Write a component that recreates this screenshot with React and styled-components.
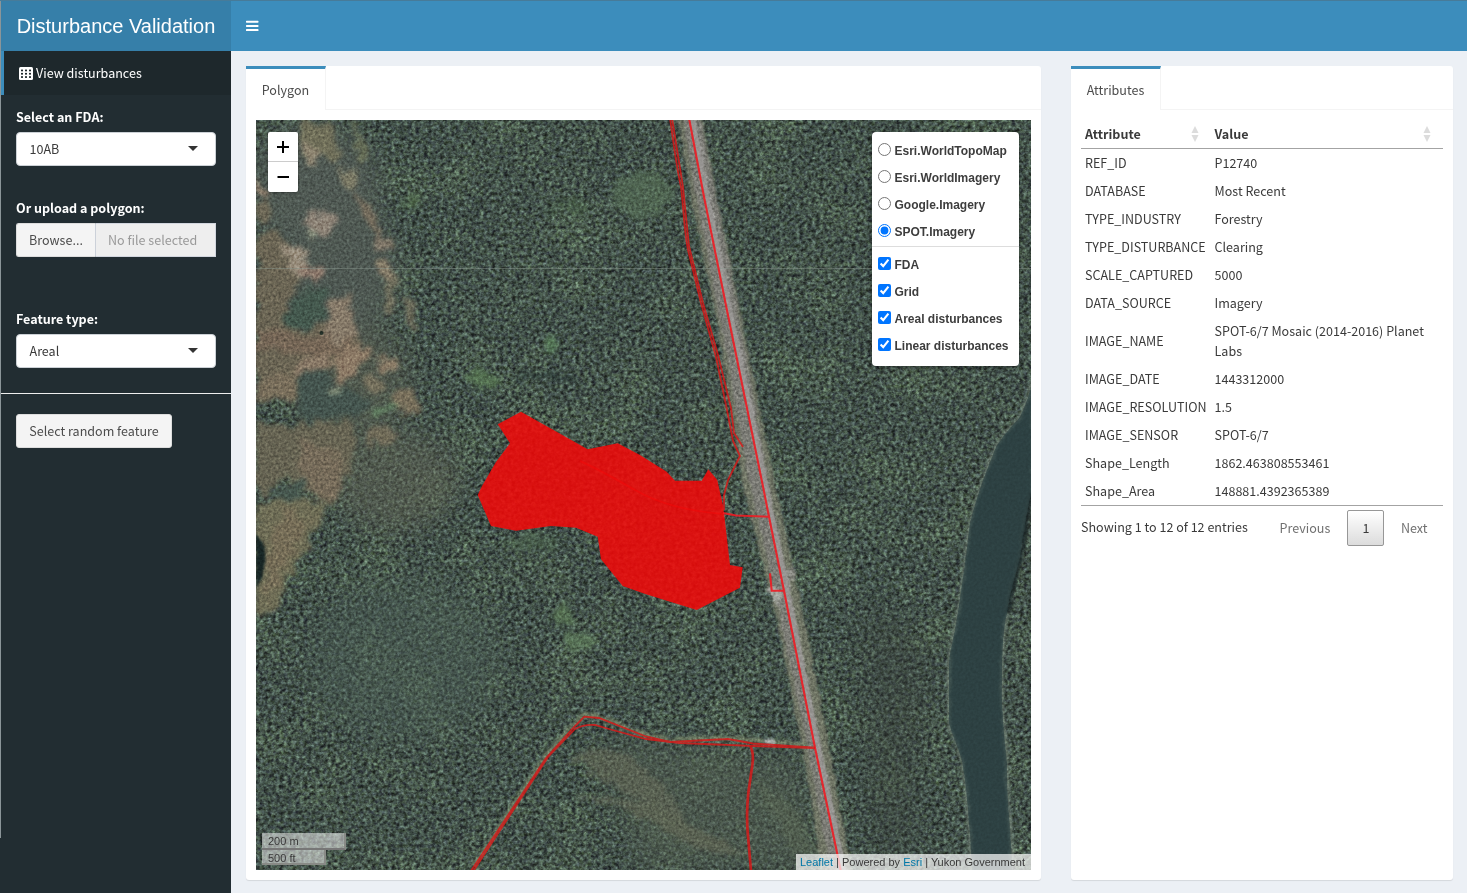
import React from 'react';
import styled, { createGlobalStyle } from 'styled-components';

const GlobalStyle = createGlobalStyle`
  * { box-sizing: border-box; }
  body {
    margin: 0;
    background: #222d32;
    font-family: "Noto Sans CJK SC", "Open Sans", sans-serif;
    font-size: 12.55px;
    line-height: 20px;
    color: #3a3a3a;
  }
`;

const Page = styled.div`
  display: grid;
  grid-template-columns: 1px 230px 1fr;
  grid-template-rows: 50px 1fr;
  height: 893px;
  overflow: hidden;
  border-top: 1px solid #477b99;
`;

const WindowEdge = styled.div`
  grid-row: 1 / 3;
  background: linear-gradient(#8b9599 837px, #222d32 837px);
`;

const Logo = styled.div`
  background: #367fa9;
  color: #fff;
  font: 20px/50px "Liberation Sans", Arial, sans-serif;
  text-align: center;
  white-space: nowrap;
`;

const Navbar = styled.header`
  background: #3c8dbc;
  display: flex;
  align-items: center;
  padding-left: 15px;
`;

const Sidebar = styled.aside`
  background: #222d32;
  color: #fff;
`;

const MenuItem = styled.a`
  display: flex;
  align-items: center;
  gap: 3px;
  height: 44px;
  padding-left: 15px;
  background: #1e282c;
  border-left: 3px solid #3c8dbc;
`;

const Field = styled.div`
  padding: ${p => p.$top}px 15px 0;
`;

const Label = styled.label`
  display: block;
  font-weight: 700;
  margin-bottom: 5px;
`;

const SelectBox = styled.div`
  display: flex;
  align-items: center;
  justify-content: space-between;
  height: 34px;
  padding: 0 17px 0 12.5px;
  background: #fff;
  color: #3a3a3a;
  border: 1px solid #ccd1d6;
  border-radius: 4px;
`;

const Caret = styled.span`
  margin-bottom: 2px;
  border: 5px solid transparent;
  border-top-color: #333;
  border-bottom: 0;
`;

const FileGroup = styled.div`
  display: flex;
  height: 34px;
  line-height: 32px;
`;

const Browse = styled.span`
  width: 80px;
  padding-left: 12px;
  background: #f4f4f4;
  color: #4c4c4c;
  border: 1px solid #ddd;
  border-right-color: #ccd1d9;
  border-radius: 3px 0 0 3px;
`;

const FileName = styled.span`
  flex: 1;
  padding-left: 12px;
  background: #eee;
  color: #999;
  border: 1px solid #d2d6de;
  border-left: 0;
`;

const Rule = styled.hr`
  margin: 25px 0 20px;
  border: 0;
  border-top: 1px solid #eee;
`;

const RandomButton = styled.button`
  display: block;
  width: 156px;
  height: 34px;
  margin-left: 15px;
  padding: 0;
  background: #f4f4f4;
  color: #4c4c4c;
  border: 1px solid #ddd;
  border-radius: 3px;
  font: inherit;
`;

const Content = styled.main`
  display: flex;
  gap: 30px;
  align-items: flex-start;
  padding: 15px 14px 0 15px;
  background: #ecf0f5;
`;

const Box = styled.section`
  width: ${p => p.$width}px;
  height: 814px;
  background: #fff;
  border-radius: 3px;
  box-shadow: 0 1px 1px rgba(0, 0, 0, .1);
`;

const TabBar = styled.div`
  display: flex;
  height: 44px;
  border-bottom: 1px solid #f4f4f4;
`;

const Tab = styled.div`
  width: ${p => p.$width}px;
  height: 44px;
  background: #fff;
  border-top: 3px solid #3c8dbc;
  border-right: 1px solid #f4f4f4;
  color: #4c4c4c;
  text-align: center;
  line-height: 42px;
`;

const Pane = styled.div`
  padding: 10px;
`;

const MapFrame = styled.div`
  position: relative;
  height: 750px;
  overflow: hidden;
  font: 12px/18px "Liberation Sans", Arial, sans-serif;
`;

const MapDrawing = styled.svg`
  display: block;
  width: 775px;
  height: 750px;
`;

const Texture = styled.rect`
  mix-blend-mode: overlay;
`;

const ZoomControl = styled.div`
  position: absolute;
  top: 12px;
  left: 12px;
  width: 30px;
  height: 60px;
  background: #fff;
  border-radius: 2px;
  box-shadow: 0 1px 3px rgba(0, 0, 0, .4);
`;

const ZoomButton = styled.div`
  display: grid;
  place-items: center;
  height: 30px;
  &:first-child { border-bottom: 1px solid #ccc; }
`;

const Layers = styled.div`
  position: absolute;
  top: 12px;
  right: 12px;
  width: 147px;
  height: 234px;
  padding-top: 5px;
  background: #fff;
  border-radius: 4px;
  box-shadow: 0 1px 4px rgba(0, 0, 0, .4);
`;

const LayerOption = styled.label`
  display: flex;
  align-items: center;
  gap: 3.5px;
  height: 27px;
  padding-left: 6px;
  color: #3d3d3d;
  font-weight: 700;
  white-space: nowrap;
  input {
    width: 13px;
    height: 13px;
    margin: 0 0 2px;
    accent-color: #0075ff;
  }
`;

const LayerDivider = styled.div`
  height: 1px;
  margin: 1px 0 4px;
  background: #ddd;
`;

const Scale = styled.div`
  position: absolute;
  left: 6px;
  bottom: 5px;
  font-size: 11px;
  line-height: 14px;
`;

const ScaleLine = styled.div`
  width: ${p => p.$width}px;
  height: ${p => p.$height}px;
  padding: 1px 0 0 6px;
  background: rgba(255, 255, 255, .5);
  border: 2px solid #777;
  border-color: ${p => (p.$last ? 'transparent #888a86 #888a86 transparent' : 'transparent #888a86 #777 transparent')};
  border-top: 0;
  border-left: 0;
`;

const Attribution = styled.div`
  position: absolute;
  right: 0;
  bottom: 0;
  height: 16px;
  width: 235px;
  padding: 0 5px 0 4px;
  background: rgba(255, 255, 255, .7);
  font-size: 11px;
  line-height: 16px;
  white-space: nowrap;
  a { color: #0078a8; }
`;

const Table = styled.table`
  width: 362px;
  border-collapse: separate;
  border-spacing: 0;
  table-layout: fixed;
  border-bottom: 1px solid #a3a3a3;
  td { padding: 4px 0 4px 4px; white-space: nowrap; }
`;

const HeadCell = styled.th`
  width: ${p => p.$width}px;
  height: 29px;
  padding: 0 ${p => p.$right}px 0 4px;
  border-bottom: 1px solid #a3a3a3;
  text-align: left;
`;

const HeadInner = styled.div`
  display: flex;
  align-items: center;
  justify-content: space-between;
`;

const Footer = styled.div`
  display: flex;
  align-items: center;
  height: 36px;
  margin-top: 4px;
`;

const Info = styled.span`
  width: 198.5px;
  padding-bottom: 2px;
  white-space: nowrap;
`;

const PageLink = styled.span`
  color: #707070;
`;

const Current = styled.span`
  width: 37px;
  height: 36px;
  margin: 0 16.5px 0 auto;
  border: 1px solid #979797;
  border-radius: 2px;
  background: linear-gradient(#fff, #dcdcdc);
  text-align: center;
  line-height: 34px;
`;

const Pager = styled.div`
  display: flex;
  align-items: center;
  width: 148px;
`;

const attributes = [
  ['REF_ID', 'P12740'],
  ['DATABASE', 'Most Recent'],
  ['TYPE_INDUSTRY', 'Forestry'],
  ['TYPE_DISTURBANCE', 'Clearing'],
  ['SCALE_CAPTURED', '5000'],
  ['DATA_SOURCE', 'Imagery'],
  ['IMAGE_NAME', <>SPOT-6/7 Mosaic (2014-2016) Planet<br />Labs</>],
  ['IMAGE_DATE', '1443312000'],
  ['IMAGE_RESOLUTION', '1.5'],
  ['IMAGE_SENSOR', 'SPOT-6/7'],
  ['Shape_Length', '1862.463808553461'],
  ['Shape_Area', '148881.4392365389'],
];

const baseLayers = ['Esri.WorldTopoMap', 'Esri.WorldImagery', 'Google.Imagery', 'SPOT.Imagery'];
const overlays = ['FDA', 'Grid', 'Areal disturbances', 'Linear disturbances'];

const BarsIcon = () => (
  <svg width="13" height="12" viewBox="0 0 13 12" fill="#fff">
    <rect y="0.7" width="12.5" height="2" rx=".6" />
    <rect y="4.9" width="12.5" height="2" rx=".6" />
    <rect y="9.1" width="12.5" height="2" rx=".6" />
  </svg>
);

const TableIcon = () => (
  <svg width="14" height="13" viewBox="0 0 14 13">
    <rect width="14" height="13" rx="1.5" fill="#fff" />
    <g fill="#1e282c">
      {[2.6, 5.9, 9.2].map(y => [2, 6, 10].map(x => (
        <rect key={`${x}-${y}`} x={x} y={y} width="2" height="1.7" />
      )))}
    </g>
  </svg>
);

const SortIcon = () => (
  <svg width="8" height="16" viewBox="0 0 8 16" fill="#dcdcdc">
    <path d="M4 0L7.5 7H.5Z" />
    <path d="M4 16L7.5 9H.5Z" />
  </svg>
);

const ROAD = 'M689 118L703.3 193.3L728.3 316.7L763.3 488L769 516.7L784 590.7L815 747.7L837.3 854L841 872';
const LANE = 'M692 118L706 193L731 316L766 488L787 590L818 747L844 872';
const RIVER = 'M1033 378C1029 398 1024 408 1020 417C1010 428 1000 440 996 447L987 470C979 490 974 508 970 523C967 545 966 560 963 577C960 600 957 618 955 630C951 650 949 656 949 667L949 723C954 742 962 754 963 767C967 790 968 815 970 833L972 872H1012C1012 835 1006 800 1007 763C1004 735 1001 705 1002 680C1002 650 1003 630 1007 613C1010 590 1016 575 1020 557C1024 530 1027 508 1033 486Z';

const SatelliteMap = () => (
  <MapDrawing viewBox="256 120 775 750">
    <defs>
      <filter id="canopy" x="0" y="0" width="100%" height="100%" colorInterpolationFilters="sRGB">
        <feTurbulence type="fractalNoise" baseFrequency="0.25 0.27" numOctaves="4" seed="4" />
        <feColorMatrix values="1.5 0.5 0 0 -0.48  1.5 0.6 0 0 -0.54  1.5 0.3 0.2 0 -0.48  0 0 0 0 1" />
      </filter>
      <filter id="grain" x="0" y="0" width="100%" height="100%" colorInterpolationFilters="sRGB">
        <feTurbulence type="fractalNoise" baseFrequency="0.38" numOctaves="2" seed="9" />
        <feColorMatrix values="1 0.5 0 0 -0.25  1 0.5 0 0 -0.25  1 0.5 0 0 -0.25  0 0 0 0 1" />
      </filter>
      <filter id="mottle" x="0" y="0" width="100%" height="100%" colorInterpolationFilters="sRGB">
        <feTurbulence type="fractalNoise" baseFrequency="0.02" numOctaves="4" seed="11" />
        <feColorMatrix values="0 0 0 0 0.36  0 0 0 0 0.45  0 0 0 0 0.34  2.6 0 0 0 -1.15" />
      </filter>
      <filter id="ragged" x="-10%" y="-10%" width="120%" height="120%" colorInterpolationFilters="sRGB">
        <feTurbulence type="fractalNoise" baseFrequency="0.07" numOctaves="4" seed="7" />
        <feDisplacementMap in="SourceGraphic" scale="20" xChannelSelector="R" yChannelSelector="G" />
        <feGaussianBlur stdDeviation="2" />
      </filter>
      <filter id="haze" x="-50%" y="-50%" width="200%" height="200%" colorInterpolationFilters="sRGB">
        <feGaussianBlur stdDeviation="14" />
      </filter>
      <filter id="edge" x="-10%" y="-10%" width="120%" height="120%" colorInterpolationFilters="sRGB">
        <feTurbulence type="fractalNoise" baseFrequency="0.12" numOctaves="2" seed="3" />
        <feDisplacementMap in="SourceGraphic" scale="5" xChannelSelector="R" yChannelSelector="G" />
        <feGaussianBlur stdDeviation=".8" />
      </filter>
    </defs>

    <rect x="256" y="120" width="775" height="750" fill="#404f47" />
    <rect x="256" y="120" width="775" height="750" filter="url(#mottle)" opacity=".35" />
    <Texture x="256" y="120" width="775" height="750" filter="url(#canopy)" opacity=".6" />

    <g filter="url(#haze)">
      <ellipse cx="405" cy="660" rx="95" ry="80" fill="#4a5b53" opacity=".5" />
      <ellipse cx="315" cy="190" rx="65" ry="65" fill="#515a54" opacity=".9" />
      <ellipse cx="340" cy="270" rx="55" ry="75" fill="#505953" opacity=".9" />
      <ellipse cx="395" cy="480" rx="65" ry="50" fill="#5c6054" opacity=".6" />
      <ellipse cx="350" cy="380" rx="60" ry="55" fill="#555b50" opacity=".7" />
      <path d="M600 740L800 760L815 870H640Z" fill="#505c50" opacity=".6" />
      <path d="M860 600L930 640L910 860L870 850Z" fill="#39413d" opacity=".4" />
    </g>

    <g filter="url(#ragged)" opacity=".9">
      <path d="M256 235L282 230L298 268L298 288L284 308L284 322L305 332L328 320L352 330L364 348L372 352L352 375L340 385L334 366L318 366L296 375L293 398L256 402Z" fill="#6f6755" />
      <path d="M256 328L298 335L350 336L352 352L320 358L296 350L256 352Z" fill="#7a6857" />
      <path d="M292 368L326 352L332 362L312 370L296 376Z" fill="#8f7c69" />
      <path d="M256 382L296 372L295 396L256 398Z" fill="#7e715d" />
      <path d="M256 424L310 425L320 418L345 422L357 438L353 470L334 492L330 505L305 488L285 480L256 498Z" fill="#6a6654" />
      <path d="M300 440L340 452L345 480L328 502L300 478Z" fill="#7a6d5b" />
      <path d="M256 502L290 500L305 498L328 502L318 525L300 560L282 590L276 612L256 614Z" fill="#737057" />
      <path d="M284 508L310 525L295 550L272 590L264 612L268 550Z" fill="#7f7059" opacity=".7" />
      <path d="M301 122L333 124L343 155L335 163L318 155L308 162L300 150Z" fill="#74725b" />
      <path d="M300 142L320 148L322 160L308 163Z" fill="#968a75" />
      <path d="M350 120L360 148L362 162" fill="none" stroke="#6c7259" strokeWidth="6" />
      <ellipse cx="350" cy="178" rx="8" ry="11" fill="#817e68" />
      <path d="M358 194L366 210L375 225L383 246" fill="none" stroke="#7b705f" strokeWidth="8" />
      <path d="M383 260L393 282L390 318M405 298L415 330" fill="none" stroke="#73705d" strokeWidth="9" />
      <ellipse cx="319" cy="222" rx="17" ry="11" fill="#93877a" />
      <ellipse cx="313" cy="234" rx="4" ry="5" fill="#8e9480" />
      <path d="M280 246L302 252L308 265L321 272L316 279L300 281L291 266Z" fill="#a29482" />
      <path d="M300 266L321 270L317 280L300 281Z" fill="#937c6e" />
      <path d="M330 298L348 298L352 316L358 334L340 345L322 335L330 316Z" fill="#8c7d6b" />
      <path d="M340 351L358 343L373 349L362 360L356 375L340 384L336 368Z" fill="#937e69" />
      <ellipse cx="387" cy="364" rx="9" ry="8" fill="#92806a" />
      <ellipse cx="374" cy="382" rx="11" ry="10" fill="#7a735f" />
      <ellipse cx="407" cy="403" rx="15" ry="11" fill="#7d725d" />
      <ellipse cx="382" cy="436" rx="14" ry="12" fill="#736c59" />
      <ellipse cx="387" cy="272" rx="8" ry="13" fill="#8c806b" />
      <ellipse cx="383" cy="243" rx="8" ry="8" fill="#84796a" />
      <path d="M256 180L268 190L270 196L256 188Z" fill="#9a8470" />
      <ellipse cx="263" cy="211" rx="9" ry="12" fill="#6f6856" />
      <path d="M297 380L322 370L332 380L326 393L345 389L372 400L358 418L330 415L300 422Z" fill="#43544e" />
      <path d="M284 312L306 288L325 288L326 316L305 330L286 322Z" fill="#43584d" />
      <path d="M275 493L302 480L303 500L275 502Z" fill="#47574f" />
      <ellipse cx="334" cy="389" rx="5" ry="5" fill="#a1ad92" />
      <path d="M374 414L394 403" stroke="#638363" strokeWidth="7" />
      <ellipse cx="642" cy="195" rx="30" ry="23" fill="#566d55" opacity=".75" />
      <ellipse cx="570" cy="207" rx="23" ry="8" fill="#486047" opacity=".5" />
      <ellipse cx="410" cy="202" rx="12" ry="6" fill="#56704f" opacity=".7" />
      <ellipse cx="552" cy="344" rx="8" ry="7" fill="#5b805a" opacity=".85" />
      <ellipse cx="484" cy="378" rx="16" ry="8" fill="#5a7a55" opacity=".85" />
      <ellipse cx="546" cy="378" rx="34" ry="4" fill="#293937" opacity=".65" />
      <ellipse cx="562" cy="615" rx="9" ry="13" fill="#5b7755" opacity=".85" />
      <ellipse cx="580" cy="640" rx="16" ry="8" fill="#5d7959" opacity=".85" />
      <ellipse cx="530" cy="542" rx="28" ry="8" fill="#4e684e" opacity=".6" />
      <path d="M585 745L628 755L665 785L690 830L635 795L570 760Z" fill="#626656" opacity=".7" />
      <path d="M570 795L645 802L750 855L700 850L630 812Z" fill="#646855" opacity=".7" />
      <path d="M750 770L800 815L818 860L790 850Z" fill="#566251" opacity=".65" />
    </g>
    <path d="M256 534Q272 548 261 578L256 588Z" fill="#182625" filter="url(#edge)" />
    <circle cx="321.5" cy="333" r="2" fill="#222e26" />

    <path d={RIVER} fill="#2d4041" stroke="#66756a" strokeWidth="3.5" filter="url(#edge)" />
    <path d="M1031 492L1021 556L1007 613" fill="none" stroke="#202c2c" strokeWidth="5" filter="url(#edge)" />
    <g filter="url(#edge)">
      <path d="M678 118H702L716 193L740 310L775 486L784 525L800 600L822 710L852 872H822L803 750L777 620L743 486L716 316L690 193Z" fill="#6f7464" />
      <path d="M683 118H700L736 300L768 480L799 640L820 740L846 872H831L802 720L770 570L749 480L722 330L697 200Z" fill="#7b7b75" />
      <path d={LANE} fill="none" stroke="#959390" strokeWidth="6" />
      <path d="M766 590L775 585L783 592L778 606Z" fill="#a3a59e" />
      <ellipse cx="791" cy="574" rx="5" ry="7" fill="#85867f" />
      <path d="M474 866L546 755L574 724L585 714L604 718L646 735L670 740L728 738L808 745" fill="none" stroke="#6c7a62" strokeWidth="4" />
      <ellipse cx="769" cy="742" rx="6" ry="3" fill="#b0b4b0" />
    </g>

    <Texture x="256" y="120" width="775" height="750" filter="url(#grain)" opacity=".36" />
    <path d={RIVER} fill="#2e4243" opacity=".7" />
    <path d={LANE} fill="none" stroke="#999795" strokeWidth="5" opacity=".5" />
    <path d="M256 268.5H1031" stroke="#8c9990" opacity=".45" />

    <path d="M521 411.7L497.7 424.3L510 443.3L496 462L482 486L477.7 495L491 526L516 530.7L551 526L576 527.7L597.7 536.7L601 559.3L622.7 586L646 594.3L696.7 610L740 587.7L742.7 567.3L730 565L723.3 506.7L717.3 480L708.3 469.3L701.7 480.7L675 480.7L666.7 471.7L640 455L617.7 443.3L587.7 449.3Z" fill="#f50808" opacity=".86" />
    <path d="M724 514Q670 510 635 490T580 461" fill="none" stroke="#f50808" strokeWidth="2" opacity=".5" />
    <g fill="none" stroke="#ee1c24" strokeWidth="2.1" opacity=".9">
      <path d={ROAD} />
      <path d="M770 573.3L771.7 590.7H784" />
      <path d="M770 516.7L736 515.5L723 513" />
    </g>
    <g fill="none" stroke="#de1717" strokeWidth="1.8" opacity=".8">
      <path d="M670 118C674 148 677 170 681 187C684 212 684 230 688 250L701 303L716 357L727 410L733 441L740 456L728 480L724 495L724 510" />
      <path d="M672 118L683 187L689 246L703 303L718 355L731 408L734 433L743 447" />
      <path d="M471 871L546 758L574 727L584.3 716.7L599 718L646 736.5L670 742L728 739L753 743.5L815 747.7" />
      <path d="M474 870L548 757L575 729Q584 724 595 725L609 729L646 739L680 743L753 746L815 748" />
      <path d="M750.5 746Q754 754 752.5 764L748.3 793Q746 816 748 836L751 871" strokeWidth="2.7" />
    </g>
  </MapDrawing>
);

const MapView = () => (
  <MapFrame>
    <SatelliteMap />
    <ZoomControl>
      <ZoomButton><svg width="12" height="12"><path d="M6 0V12M0 6H12" stroke="#000" strokeWidth="2" /></svg></ZoomButton>
      <ZoomButton><svg width="12" height="12"><path d="M.5 6H12" stroke="#000" strokeWidth="2" /></svg></ZoomButton>
    </ZoomControl>
    <Layers>
      {baseLayers.map(name => (
        <LayerOption key={name}>
          <input type="radio" name="base" defaultChecked={name === 'SPOT.Imagery'} />{name}
        </LayerOption>
      ))}
      <LayerDivider />
      {overlays.map(name => (
        <LayerOption key={name}><input type="checkbox" defaultChecked />{name}</LayerOption>
      ))}
    </Layers>
    <Scale>
      <ScaleLine $width={84} $height={17}>200 m</ScaleLine>
      <ScaleLine $width={64} $height={15} $last>500 ft</ScaleLine>
    </Scale>
    <Attribution><a>Leaflet</a> | Powered by <a>Esri</a> | Yukon Government</Attribution>
  </MapFrame>
);

const AttributeTable = () => (
  <>
    <Table>
      <thead>
        <tr>
          <HeadCell $width={129.5} $right={12}><HeadInner>Attribute<SortIcon /></HeadInner></HeadCell>
          <HeadCell $width={232.5} $right={12}><HeadInner>Value<SortIcon /></HeadInner></HeadCell>
        </tr>
      </thead>
      <tbody>
        {attributes.map(([name, value]) => (
          <tr key={name}><td>{name}</td><td>{value}</td></tr>
        ))}
      </tbody>
    </Table>
    <Footer>
      <Info>Showing 1 to 12 of 12 entries</Info>
      <Pager>
        <PageLink>Previous</PageLink>
        <Current>1</Current>
        <PageLink>Next</PageLink>
      </Pager>
    </Footer>
  </>
);

export default function App() {
  return (
    <>
      <GlobalStyle />
      <Page>
        <WindowEdge />
        <Logo>Disturbance Validation</Logo>
        <Navbar><BarsIcon /></Navbar>
        <Sidebar>
          <MenuItem><TableIcon />View disturbances</MenuItem>
          <Field $top={12}>
            <Label>Select an FDA:</Label>
            <SelectBox>10AB<Caret /></SelectBox>
          </Field>
          <Field $top={32}>
            <Label>Or upload a polygon:</Label>
            <FileGroup><Browse>Browse...</Browse><FileName>No file selected</FileName></FileGroup>
          </Field>
          <Field $top={52}>
            <Label>Feature type:</Label>
            <SelectBox>Areal<Caret /></SelectBox>
          </Field>
          <Rule />
          <RandomButton>Select random feature</RandomButton>
        </Sidebar>
        <Content>
          <Box $width={795}>
            <TabBar><Tab $width={80}>Polygon</Tab></TabBar>
            <Pane><MapView /></Pane>
          </Box>
          <Box $width={382}>
            <TabBar><Tab $width={90}>Attributes</Tab></TabBar>
            <Pane><AttributeTable /></Pane>
          </Box>
        </Content>
      </Page>
    </>
  );
}
